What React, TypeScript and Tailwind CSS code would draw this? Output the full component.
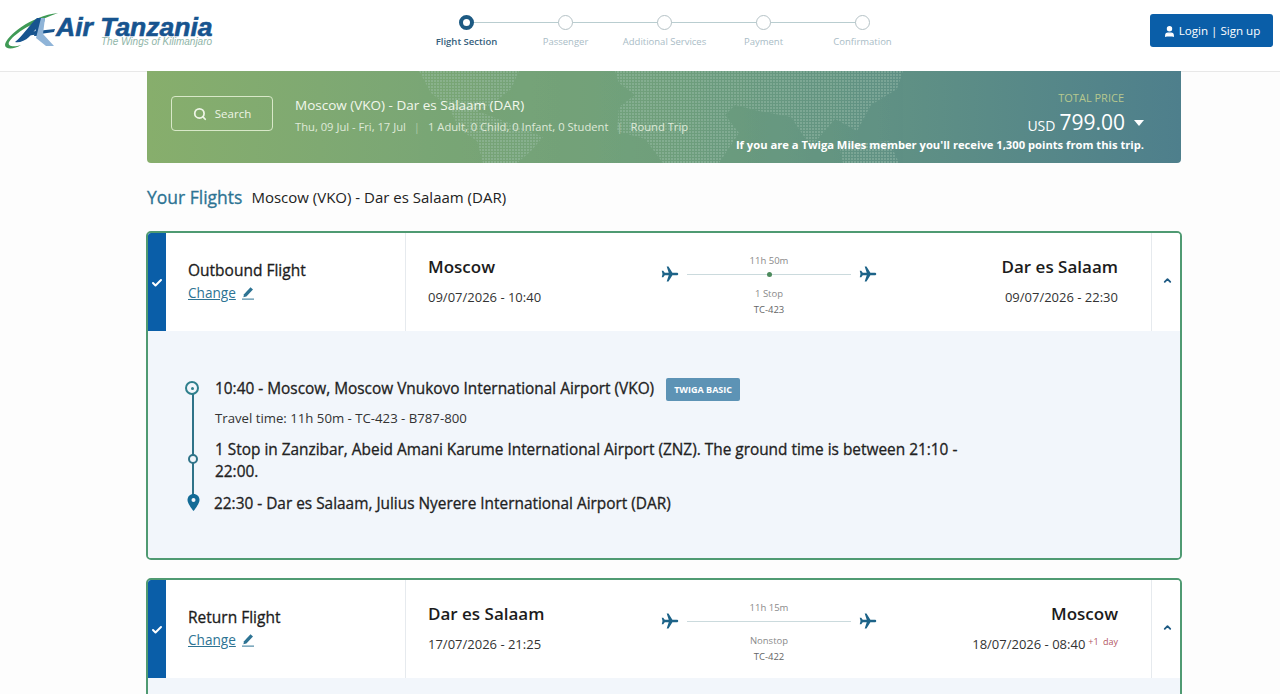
import React from "react";
import { Search, User, Check, ChevronUp } from "lucide-react";

const steps = ["Flight Section", "Passenger", "Additional Services", "Payment", "Confirmation"];

const Logo = () => (
  <div className="relative w-[212px] h-[48px]">
    <svg className="absolute left-0 top-0" width="60" height="48" viewBox="0 0 60 48">
      <path d="M2 34 C3 25 28 5 55 2 C38 8 13 20 6 31 C4 36 12 36 18 34 C12 38 2 39 2 34 Z" fill="#3f9a55" />
      <path d="M12 31 C20 25 27 13 34 7 L42 7 L38 25 L31 25 L33 18 L26 26 C22 30 16 32 12 31 Z" fill="#17548f" />
      <path d="M24 21 L52 18 L51 21 L23 25 Z" fill="#17548f" />
      <path d="M38 7 L42 7 L40 23 L51 35 L43 35 L33 27 Z" fill="#8fb4d8" />
    </svg>
    <div className="absolute left-[53px] top-[6px] font-['Liberation_Sans',sans-serif] text-[26.5px] leading-[20px] font-bold italic text-[#17548f] [-webkit-text-stroke:0.6px_#17548f] whitespace-nowrap">
      Air Tanzania
    </div>
    <div className="absolute left-[98px] top-[26px] font-['Liberation_Sans',sans-serif] text-[10px] leading-[10px] italic text-[#8fb5a8] whitespace-nowrap">
      The Wings of Kilimanjaro
    </div>
  </div>
);

const Stepper = () => (
  <div className="relative flex w-[495px]">
    <div className="absolute left-[49px] right-[49px] top-[7px] h-px bg-[#b9cdd0]" />
    {steps.map((s, i) => (
      <div key={s} className="relative w-[99px] flex flex-col items-center">
        {i === 0 ? (
          <div className="w-[15px] h-[15px] rounded-full border-[4px] border-[#1d5a83] bg-white" />
        ) : (
          <div className="w-[15px] h-[15px] rounded-full border border-[#b5c2c6] bg-white" />
        )}
        <span className={`mt-[5px] text-[9.5px] leading-[14px] whitespace-nowrap ${i === 0 ? "text-[#35607c] font-semibold" : "text-[#a9bcc6]"}`}>
          {s}
        </span>
      </div>
    ))}
  </div>
);

const WorldMap = () => (
  <svg className="absolute left-[272px] top-0 opacity-35" width="500" height="92" viewBox="0 0 500 92">
    <defs>
      <pattern id="dots" width="3" height="3" patternUnits="userSpaceOnUse">
        <rect width="2" height="2" fill="#a9c9b8" />
      </pattern>
    </defs>
    <path d="M0 0 H100 L92 18 L72 34 L58 40 L90 52 L124 66 L112 80 L98 92 H64 L58 70 L40 58 L30 36 L12 22 Z" fill="url(#dots)" />
    <path d="M196 0 H484 L478 18 L452 34 L438 60 L416 48 L392 76 L372 46 L340 40 L316 34 L306 44 L320 62 L300 92 H244 L226 68 L198 60 L200 36 L216 24 L200 12 Z" fill="url(#dots)" />
    <path d="M420 74 L470 70 L480 92 H424 Z" fill="url(#dots)" />
  </svg>
);

const Plane = () => (
  <svg width="18" height="18" viewBox="0 0 24 24" fill="#1d6388">
    <path d="M23 12c0-1-1-1.7-2.2-1.7h-5.6L10 2H7.6l2.7 8.3H5L3 7.6H1l1 4.4-1 4.4h2l2-2.7h5.3L7.6 22H10l5.2-8.3h5.6C22 13.7 23 13 23 12Z" />
  </svg>
);

const EditPen = () => (
  <svg width="14" height="14" viewBox="0 0 14 14" fill="#2d7393">
    <path d="M9.5 1.2 12 3.4 5.4 10.4 2.4 11.3 3 8.2Z" />
    <rect x="1" y="12.6" width="12" height="1" />
  </svg>
);

type RouteProps = {
  from: string;
  fromTime: string;
  to: string;
  toTime: string;
  duration: string;
  stops: string;
  flight: string;
  dot?: boolean;
  plusDay?: boolean;
};

const FlightHeader = ({ title, route }: { title: string; route: RouteProps }) => (
  <div className="flex h-[98px] bg-white">
    <div className="w-[18px] shrink-0 bg-[#0a5ea8] flex items-center justify-center">
      <Check size={12} strokeWidth={4} className="text-white mt-[2px] -ml-px" />
    </div>
    <div className="w-[240px] shrink-0 pl-[22px] pt-[26px] border-r border-[#e6eaee]">
      <div className="text-[15.5px] leading-[22px] font-medium text-[#1c1c1c] [-webkit-text-stroke:0.3px_#1c1c1c]">{title}</div>
      <div className="flex items-center gap-[5px] mt-[1px] h-[22px]">
        <a href="#" className="text-[13.6px] leading-[22px] underline text-[#2d7393]">Change</a>
        <EditPen />
      </div>
    </div>
    <div className="flex-1 flex pl-[22px] pr-[33px]">
      <div className="w-[233px] shrink-0 pt-[22px]">
        <div className="text-[17px] leading-[24px] font-semibold text-[#1c1c1c]">{route.from}</div>
        <div className="mt-[8px] text-[13px] leading-[20px] text-[#333]">{route.fromTime}</div>
      </div>
      <div className="w-[216px] shrink-0 flex flex-col items-center pt-[21px]">
        <div className="text-[9.5px] leading-[14px] text-[#8a8a8a]">{route.duration}</div>
        <div className="w-full flex items-center -mt-[3px]">
          <Plane />
          <div className="relative flex-1 h-px bg-[#cbdadd] mx-[8px]">
            {route.dot && (
              <div className="absolute left-1/2 -top-[2px] -ml-[2px] w-[5px] h-[5px] rounded-full bg-[#4c8a5c]" />
            )}
          </div>
          <Plane />
        </div>
        <div className="mt-[4px] text-[9.5px] leading-[14px] text-[#8a8a8a]">{route.stops}</div>
        <div className="mt-[2px] text-[9.5px] leading-[14px] text-[#666]">{route.flight}</div>
      </div>
      <div className="flex-1 pt-[22px] text-right">
        <div className="text-[17px] leading-[24px] font-semibold text-[#1c1c1c]">{route.to}</div>
        <div className="mt-[8px] text-[13px] leading-[20px] text-[#333] whitespace-nowrap">
          {route.toTime}
          {route.plusDay && (
            <sup className="ml-[3px] text-[9px] text-[#b3565f]">+1 <span className="ml-[2px]">day</span></sup>
          )}
        </div>
      </div>
    </div>
    <div className="w-[29px] shrink-0 border-l border-[#e6eaee] flex items-center justify-center">
      <ChevronUp size={11} strokeWidth={4} className="text-[#1d5a83] ml-[2px] -mt-[3px]" />
    </div>
  </div>
);

const FlightDetail = () => (
  <div className="h-[227px] bg-[#f2f6fb] relative pl-[67px] pt-[47px] text-[#222]">
    <div className="absolute left-[44px] top-[58px] w-[2px] h-[115px] bg-[#2f7388]" />
    <div className="absolute left-[37px] top-[50px] w-[14px] h-[14px] rounded-full border-2 border-[#2f7f8c] bg-[#f2f6fb] flex items-center justify-center">
      <div className="w-[3px] h-[3px] rounded-full bg-[#2f7f8c]" />
    </div>
    <div className="absolute left-[40px] top-[123px] w-[10px] h-[10px] rounded-full border-2 border-[#2f7388] bg-[#f2f6fb]" />
    <svg className="absolute left-[39px] top-[163px]" width="13" height="17" viewBox="0 0 13 17">
      <path d="M6.5 0C3 0 0.5 2.6 0.5 6c0 4 6 11 6 11s6-7 6-11c0-3.4-2.5-6-6-6Z" fill="#136b96" />
      <circle cx="6.5" cy="6" r="2" fill="#f2f6fb" />
    </svg>
    <div className="flex items-start h-[22px]">
      <span className="text-[15.4px] leading-[22px] font-medium [-webkit-text-stroke:0.3px_#222]">10:40 - Moscow, Moscow Vnukovo International Airport (VKO)</span>
      <span className="ml-[12px] h-[23px] px-[8px] flex items-center rounded-[2px] bg-[#5d93b5] text-white text-[9px] font-bold">TWIGA BASIC</span>
    </div>
    <div className="mt-[8px] text-[13.2px] leading-[20px] text-[#333]">Travel time: 11h 50m - TC-423 - B787-800</div>
    <div className="mt-[11px] w-[760px] text-[15.4px] leading-[22px] font-medium [-webkit-text-stroke:0.3px_#222]">
      1 Stop in Zanzibar, Abeid Amani Karume International Airport (ZNZ). The ground time is between 21:10 - 22:00.
    </div>
    <div className="-ml-px mt-[10px] text-[15.4px] leading-[22px] font-medium [-webkit-text-stroke:0.3px_#222]">22:30 - Dar es Salaam, Julius Nyerere International Airport (DAR)</div>
  </div>
);

const App = () => {
  return (
    <div className="h-[694px] overflow-hidden bg-[#fdfdfd] font-['Open_Sans',sans-serif]">
      {/* Header */}
      <header className="relative h-[72px] bg-white border-b border-[#e8e8e8] flex items-start">
        <div className="pl-[3px] pt-[11px] w-[417px]"><Logo /></div>
        <div className="pt-[15px]"><Stepper /></div>
        <button className="absolute right-[7px] top-[14px] w-[123px] h-[33px] rounded-[3px] bg-[#0a5ea8] text-white text-[11.6px] font-medium flex items-center justify-center gap-[3px]">
          <User size={13} fill="white" className="mt-[2px]" />
          <span>Login | Sign up</span>
        </button>
      </header>

      <main className="w-[1034px] ml-[147px]">
        {/* Summary banner */}
        <section className="relative h-[92px] -mt-px overflow-hidden rounded-b-[4px] bg-gradient-to-r from-[#87ae6c] via-[#6f9f7c] to-[#4e7f8c] text-white">
          <WorldMap />
          <div className="relative flex h-full">
            <button className="mt-[25px] ml-[24px] w-[102px] h-[35px] rounded-[4px] border border-[#d8e8c8] flex items-center justify-center gap-[8px] text-[11.5px] text-[#eef5e6]">
              <Search size={14} strokeWidth={3} />
              <span>Search</span>
            </button>
            <div className="ml-[22px] pt-[24px]">
              <div className="text-[13.5px] leading-[20px] text-[#f2f7ec]">Moscow (VKO) - Dar es Salaam (DAR)</div>
              <div className="mt-[3px] flex items-center text-[11.2px] leading-[17px] text-[#dfe9d8] whitespace-nowrap">
                <span>Thu, 09 Jul - Fri, 17 Jul</span>
                <span className="mx-[8px] opacity-50">|</span>
                <span>1 Adult, 0 Child, 0 Infant, 0 Student</span>
                <span className="mx-[8px] opacity-50">|</span>
                <span>Round Trip</span>
              </div>
            </div>
            <div className="absolute right-[37px] top-[19px] text-right">
              <div className="pr-[20px] mb-[1px] text-[11px] leading-[16px] text-[#b7c88f]">TOTAL PRICE</div>
              <div className="flex items-center justify-end">
                <span className="text-[14px] mt-[5px]">USD</span>
                <span className="ml-[4px] text-[21px] leading-[31px]">799.00</span>
                <span className="ml-[9px] w-0 h-0 border-x-[5px] border-x-transparent border-t-[6px] border-t-white" />
              </div>
              <div className="-mt-px text-[11.2px] leading-[16px] font-bold whitespace-nowrap">
                If you are a Twiga Miles member you'll receive 1,300 points from this trip.
              </div>
            </div>
          </div>
        </section>

        {/* Title row */}
        <div className="mt-[21px] h-[27px] flex items-center">
          <h2 className="text-[17.5px] font-medium text-[#2d7393] [-webkit-text-stroke:0.3px_#2d7393]">Your Flights</h2>
          <span className="ml-[9px] text-[15px] text-[#222]">Moscow (VKO) - Dar es Salaam (DAR)</span>
        </div>

        {/* Outbound */}
        <section className="mt-[20px] w-[1036px] -ml-px border-2 border-[#4f9a72] rounded-[5px] overflow-hidden">
          <FlightHeader
            title="Outbound Flight"
            route={{ from: "Moscow", fromTime: "09/07/2026 - 10:40", to: "Dar es Salaam", toTime: "09/07/2026 - 22:30", duration: "11h 50m", stops: "1 Stop", flight: "TC-423", dot: true }}
          />
          <FlightDetail />
        </section>

        {/* Return */}
        <section className="mt-[18px] w-[1036px] -ml-px border-2 border-[#4f9a72] rounded-[5px] overflow-hidden">
          <FlightHeader
            title="Return Flight"
            route={{ from: "Dar es Salaam", fromTime: "17/07/2026 - 21:25", to: "Moscow", toTime: "18/07/2026 - 08:40", duration: "11h 15m", stops: "Nonstop", flight: "TC-422", plusDay: true }}
          />
          <div className="h-[40px] bg-[#f2f6fb]" />
        </section>
      </main>
    </div>
  );
};

export default App;
